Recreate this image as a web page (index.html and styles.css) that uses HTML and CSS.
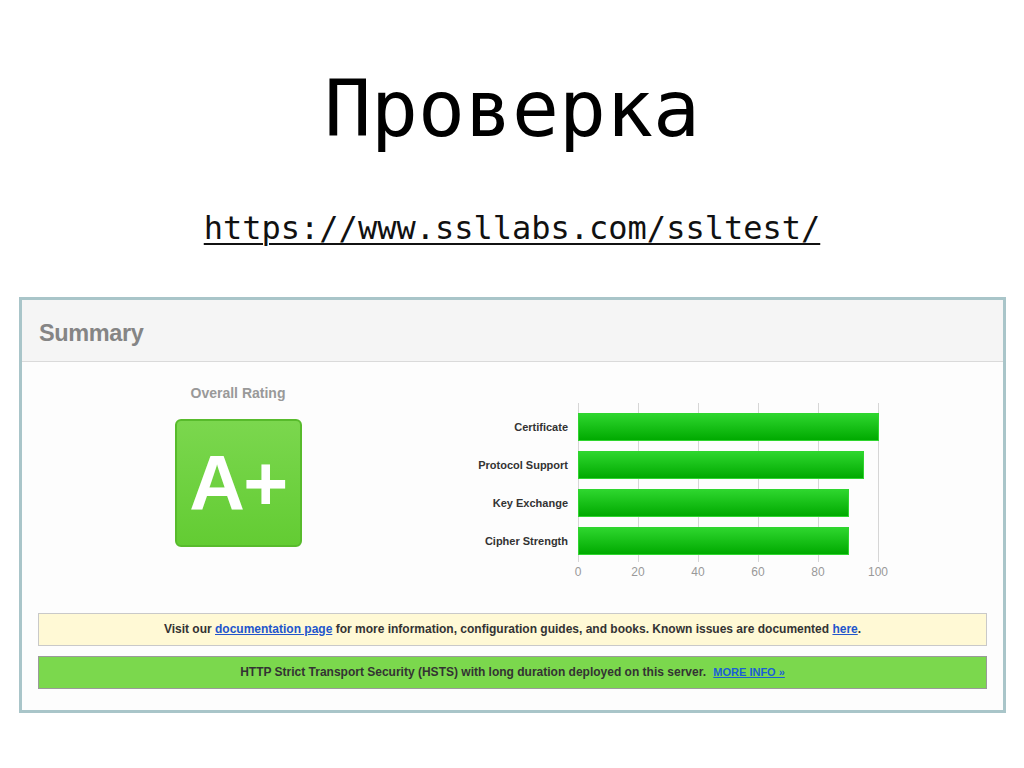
FILE: index.html
```html
<!DOCTYPE html>
<html lang="ru">
<head>
    <meta charset="UTF-8">
    <title>Проверка</title>
    <link rel="stylesheet" href="styles.css">
</head>
<body>
    <div class="slide">
        <h1 class="title">Проверка</h1>
        <p class="url"><a href="#">https://www.ssllabs.com/ssltest/</a></p>

        <div class="panel">
            <div class="panel-head">Summary</div>
            <div class="panel-body">
                <div class="summary">
                    <div class="rating">
                        <div class="rating-label">Overall Rating</div>
                        <div class="grade">A+</div>
                    </div>
                    <div class="chart">
                        <div class="labels">
                            <div class="label">Certificate</div>
                            <div class="label">Protocol Support</div>
                            <div class="label">Key Exchange</div>
                            <div class="label">Cipher Strength</div>
                        </div>
                        <div class="plot-wrap">
                            <div class="plot">
                                <div class="bar" style="width: 100%"></div>
                                <div class="bar" style="width: 95%"></div>
                                <div class="bar" style="width: 90%"></div>
                                <div class="bar" style="width: 90%"></div>
                            </div>
                            <div class="axis">
                                <span>0</span><span>20</span><span>40</span><span>60</span><span>80</span><span>100</span>
                            </div>
                        </div>
                    </div>
                </div>

                <div class="notice notice-info">
                    Visit our <a href="#">documentation page</a> for more information, configuration guides, and books. Known issues are documented <a href="#">here</a>.
                </div>
                <div class="notice notice-good">
                    HTTP Strict Transport Security (HSTS) with long duration deployed on this server. <a class="more" href="#">MORE INFO &raquo;</a>
                </div>
            </div>
        </div>
    </div>
</body>
</html>
```

FILE: styles.css
```css
body {
    margin: 0;
    background: #fff;
    font-family: "Liberation Sans", Arial, sans-serif;
}
.slide {
    width: 1024px;
    height: 768px;
    overflow: hidden;
}
.title {
    margin: 0;
    padding-top: 64px;
    font-family: "DejaVu Sans Mono", monospace;
    font-weight: normal;
    font-size: 78px;
    line-height: 90px;
    text-align: center;
    color: #000;
}
.url {
    margin: 54px 0 0;
    font-family: "DejaVu Sans Mono", monospace;
    font-size: 32px;
    line-height: 40px;
    text-align: center;
}
.url a {
    color: #111;
    text-decoration: underline;
    text-underline-offset: 4px;
    text-decoration-thickness: 2px;
}
.panel {
    margin: 49px 0 0 19px;
    width: 981px;
    border: 3px solid #a9c5c9;
    background: #fdfdfd;
}
.panel-head {
    height: 58px;
    padding: 3px 0 0 17px;
    line-height: 61px;
    background: #f5f5f5;
    border-bottom: 1px solid #dadada;
    font-size: 23.5px;
    font-weight: bold;
    color: #858585;
    letter-spacing: -0.4px;
    overflow: hidden;
}
.panel-body {
    padding: 0 16px 21px;
}
.summary {
    display: flex;
    align-items: flex-start;
    height: 220px;
}
.rating {
    width: 432px;
    margin-left: -16px;
    padding-top: 22px;
    display: flex;
    flex-direction: column;
    align-items: center;
}
.rating-label {
    font-size: 14px;
    line-height: 18px;
    font-weight: bold;
    color: #999;
}
.grade {
    margin-top: 17px;
    width: 127px;
    height: 128px;
    box-sizing: border-box;
    border: 2px solid #58bb2c;
    border-radius: 6px;
    background: linear-gradient(#7bd74e, #63cc33);
    color: #fff;
    font-size: 77px;
    font-weight: bold;
    line-height: 124px;
    text-align: center;
    letter-spacing: -1.5px;
}
.chart {
    display: flex;
    padding-top: 41px;
}
.labels {
    width: 114px;
    padding-top: 10px;
    display: flex;
    flex-direction: column;
    gap: 10px;
}
.label {
    height: 28px;
    line-height: 28px;
    text-align: right;
    font-size: 11px;
    font-weight: bold;
    color: #333;
    white-space: nowrap;
}
.plot-wrap {
    margin-left: 10px;
}
.plot {
    width: 301px;
    height: 149px;
    padding-top: 10px;
    display: flex;
    flex-direction: column;
    gap: 10px;
    background: repeating-linear-gradient(to right, #d6d6d6 0, #d6d6d6 1px, transparent 1px, transparent 60px);
}
.bar {
    height: 28px;
    box-sizing: border-box;
    border: 1px solid #2fd52f;
    background: linear-gradient(#2ed62e, #00aa00);
}
.axis {
    display: flex;
    justify-content: space-between;
    width: 324px;
    margin-left: -12px;
    padding-top: 3px;
    font-size: 12px;
    color: #999;
}
.axis span {
    width: 24px;
    text-align: center;
}
.notice {
    box-sizing: border-box;
    height: 33px;
    line-height: 31px;
    border: 1px solid #c9c9c9;
    text-align: center;
    font-size: 12px;
    font-weight: bold;
    color: #333;
}
.notice a {
    color: #2255cc;
}
.notice-info {
    margin-top: 31px;
    background: #fff9d5;
}
.notice-good {
    margin-top: 10px;
    background: #7bd84d;
    border-color: #9a9a9a;
}
.notice-good .more {
    margin-left: 4px;
    font-size: 11px;
    color: #1a5fd6;
}
```
